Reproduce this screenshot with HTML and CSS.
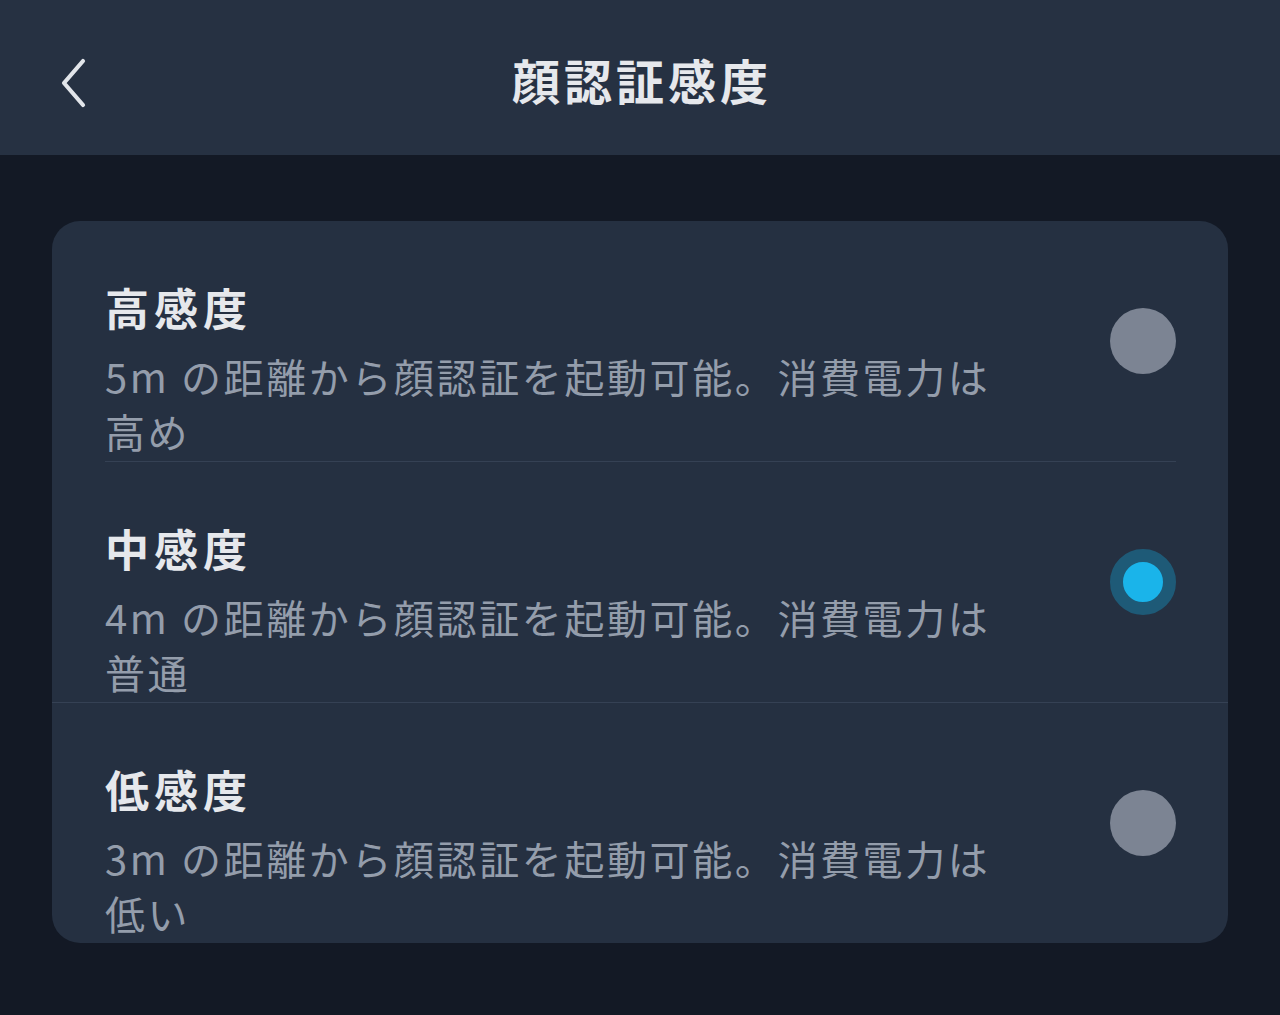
FILE: index.html
```html
<!DOCTYPE html>
<html lang="ja">
<head>
<meta charset="utf-8">
<link rel="stylesheet" href="styles.css">
</head>
<body>
<header class="topbar">
  <button class="back" aria-label="戻る">
    <svg width="40" height="56" viewBox="0 0 40 56"><path d="M27 6 L8 28 L27 50" fill="none" stroke="#e2e5ea" stroke-width="4.2" stroke-linecap="round" stroke-linejoin="round"/></svg>
  </button>
  <h1 class="title">顔認証感度</h1>
</header>
<main class="content">
  <section class="card">
    <div class="row">
      <div class="text">
        <div class="label">高感度</div>
        <div class="desc">5m の距離から顔認証を起動可能。消費電力は高め</div>
      </div>
      <span class="radio"></span>
    </div>
    <div class="sep inset"></div>
    <div class="row">
      <div class="text">
        <div class="label">中感度</div>
        <div class="desc">4m の距離から顔認証を起動可能。消費電力は普通</div>
      </div>
      <span class="radio on"></span>
    </div>
    <div class="sep"></div>
    <div class="row">
      <div class="text">
        <div class="label">低感度</div>
        <div class="desc">3m の距離から顔認証を起動可能。消費電力は低い</div>
      </div>
      <span class="radio"></span>
    </div>
  </section>
</main>
</body>
</html>
```
FILE: styles.css
```css
* { box-sizing: border-box; }
html, body { margin: 0; padding: 0; }
body {
  width: 1280px;
  height: 1015px;
  overflow: hidden;
  background: #131925;
  font-family: "Noto Sans CJK JP", "Noto Sans", sans-serif;
  color: #e6e8ec;
}
.topbar {
  height: 155px;
  background: #263142;
  display: flex;
  align-items: center;
  justify-content: center;
  position: relative;
}
.back {
  position: absolute;
  left: 56px;
  top: 55px;
  background: none;
  border: 0;
  padding: 0;
  width: 40px;
  height: 56px;
}
.back svg { display: block; }
.title {
  margin: 0;
  font-size: 48px;
  font-weight: 700;
  letter-spacing: 4px;
  color: #e6e8ec;
  line-height: 1;
  padding: 2px 0 0 4px;
}
.content {
  padding: 66px 52px 0;
}
.card {
  background: #253041;
  border-radius: 28px;
  height: 722px;
  overflow: hidden;
}
.row {
  display: flex;
  align-items: center;
  justify-content: space-between;
  padding: 0 52px 0 53px;
  height: 240px;
}
.text {
  padding-top: 56px;
  align-self: flex-start;
}
.label {
  font-size: 44px;
  font-weight: 700;
  line-height: 60px;
  letter-spacing: 5px;
  color: #e6e8ec;
}
.desc {
  margin-top: 12px;
  width: 900px;
  font-size: 40px;
  line-height: 55px;
  letter-spacing: 2.6px;
  color: #949dab;
}
.sep {
  height: 1px;
  background: #354154;
}
.sep.inset {
  margin: 0 52px 0 53px;
}
.radio {
  flex: none;
  width: 66px;
  height: 66px;
  border-radius: 50%;
  background: #7c8493;
}
.radio.on {
  background: #1ab4ea;
  border: 13px solid #1e5a77;
}
```
